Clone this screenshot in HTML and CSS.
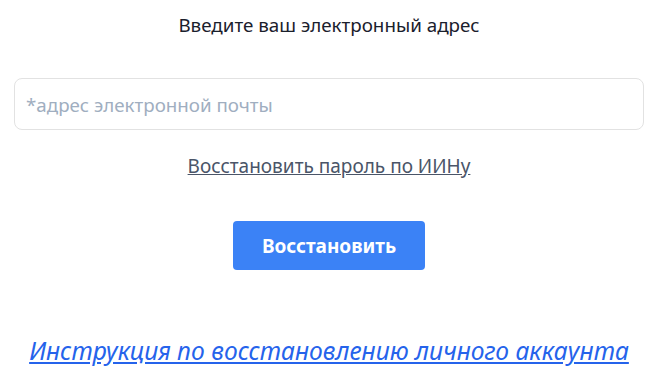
FILE: index.html
```html
<!DOCTYPE html>
<html lang="ru">
  <head>
    <meta charset="utf-8">
    <title>Восстановление пароля</title>
    <link rel="stylesheet" href="styles.css">
  </head>
  <body>
    <div class="recover">
      <p class="recover-title">Введите ваш электронный адрес</p>
      <input class="recover-input" type="email" placeholder="*адрес электронной почты">
      <a class="recover-iin" href="#">Восстановить пароль по ИИНу</a>
      <button class="recover-btn" type="button">Восстановить</button>
      <a class="recover-help" href="#">Инструкция по восстановлению личного аккаунта</a>
    </div>
  </body>
</html>
```

FILE: styles.css
```css
html,body,div,p{
  margin:0;
  padding:0;
}
body{
  background:#fff;
  font-family:"Noto Sans","Open Sans",sans-serif;
  color:#1a202c;
}
.recover{
  display:flex;
  flex-direction:column;
  align-items:center;
  padding:11px 13px 0 14px;
}
.recover-title{
  font-size:18.8px;
  line-height:28px;
  color:#1a202c;
}
.recover-input{
  box-sizing:border-box;
  margin-top:39px;
  width:100%;
  height:52px;
  padding:0 11px;
  font-family:inherit;
  font-size:18.75px;
  color:#1a202c;
  border:1px solid #e2e2e2;
  border-radius:8px;
  outline:none;
}
.recover-input::placeholder{
  color:#a0aec0;
}
.recover-iin{
  margin-top:22px;
  font-size:19px;
  line-height:28px;
  color:#4a5568;
  text-decoration:underline;
}
.recover-btn{
  margin-top:41px;
  width:192px;
  height:49px;
  font-family:inherit;
  font-size:19px;
  font-weight:700;
  color:#fff;
  background-color:#3b82f6;
  border:0;
  border-radius:4px;
  cursor:pointer;
}
.recover-btn:hover{
  background-color:#2563eb;
}
.recover-help{
  margin-top:65px;
  font-size:24.6px;
  line-height:32px;
  font-style:italic;
  color:#2563eb;
  text-decoration:underline;
}
```
